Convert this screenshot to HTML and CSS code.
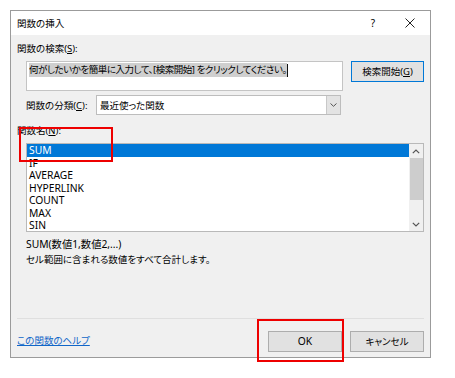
FILE: index.html
```html
<!DOCTYPE html>
<html lang="ja">
<head>
<meta charset="utf-8">
<link rel="stylesheet" href="styles.css">
</head>
<body>
<div class="dialog">
  <div class="titlebar">
    <span class="title">関数の挿入</span>
    <span class="help">?</span>
    <span class="close"><svg width="10" height="10" viewBox="0 0 10 10"><path d="M0.5 0.5 L9.5 9.5 M9.5 0.5 L0.5 9.5" stroke="#222" stroke-width="1" fill="none"/></svg></span>
  </div>
  <div class="body">
    <div class="label">関数の検索(<u>S</u>):</div>
    <div class="search-row">
      <div class="search-box"><span class="sel">何がしたいかを簡単に入力して、[検索開始] をクリックしてください。</span><span class="caret"></span></div>
      <div class="btn btn-focus">検索開始(<u>G</u>)</div>
    </div>
    <div class="cat-row">
      <div class="cat-label">関数の分類(<u>C</u>):</div>
      <div class="select">
        <span class="select-text">最近使った関数</span>
        <span class="select-btn"><svg width="7" height="4" viewBox="0 0 7 4"><path d="M0.5 0.5 L3.5 3.3 L6.5 0.5" stroke="#555" stroke-width="1" fill="none"/></svg></span>
      </div>
    </div>
    <div class="label label-fn">関数名(<u>N</u>):</div>
    <div class="listbox">
      <div class="items">
        <div class="item selected">SUM</div>
        <div class="item">IF</div>
        <div class="item">AVERAGE</div>
        <div class="item">HYPERLINK</div>
        <div class="item">COUNT</div>
        <div class="item">MAX</div>
        <div class="item">SIN</div>
      </div>
      <div class="scrollbar">
        <span class="arrow"><svg width="8" height="5" viewBox="0 0 8 5"><path d="M0.8 4.2 L4 1 L7.2 4.2" stroke="#555" stroke-width="1.2" fill="none"/></svg></span>
        <span class="thumb"></span>
        <span class="track"></span>
        <span class="arrow"><svg width="8" height="5" viewBox="0 0 8 5"><path d="M0.8 0.8 L4 4 L7.2 0.8" stroke="#555" stroke-width="1.2" fill="none"/></svg></span>
      </div>
    </div>
    <div class="desc">
      <div class="sig">SUM(数値1,数値2,...)</div>
      <div>セル範囲に含まれる数値をすべて合計します。</div>
    </div>
    <div class="separator"></div>
    <div class="bottom-row">
      <a class="link" href="#">この関数のヘルプ</a>
      <div class="buttons">
        <div class="btn btn-ok">OK</div>
        <div class="btn btn-cancel">キャンセル</div>
      </div>
    </div>
  </div>
</div>
<div class="mark mark-sum"></div>
<div class="mark mark-ok"></div>
</body>
</html>
```

FILE: styles.css
```css
html, body {
  margin: 0;
  padding: 0;
  background: #ffffff;
}
body {
  width: 455px;
  height: 378px;
  position: relative;
  overflow: hidden;
  font-family: "Noto Sans", "Noto Sans CJK JP", sans-serif;
  font-size: 9.5px;
  font-feature-settings: "palt";
  color: #000000;
}
u {
  text-decoration: underline;
  text-underline-offset: 1px;
}
.dialog {
  position: absolute;
  left: 10px;
  top: 10px;
  width: 419px;
  height: 346px;
  border: 1px solid #9b9b9b;
  background: #f0f0f0;
  display: flex;
  flex-direction: column;
}
.titlebar {
  height: 24px;
  background: #ffffff;
  display: flex;
  align-items: center;
  flex-shrink: 0;
}
.title {
  padding-left: 6px;
  flex: 1;
}
.help {
  width: 12px;
  text-align: center;
  font-size: 10px;
  margin-right: 26px;
}
.close {
  width: 10px;
  height: 10px;
  display: flex;
  margin-right: 15px;
}
.body {
  flex: 1;
  padding: 7px 6px 6px 6px;
  display: flex;
  flex-direction: column;
}
.label {
  height: 14px;
  line-height: 14px;
}
.search-row {
  margin-top: 5px;
  padding-left: 9px;
  display: flex;
  align-items: flex-start;
  gap: 8px;
}
.search-box {
  width: 311px;
  height: 26px;
  border: 1px solid #c4c4c4;
  background: #ffffff;
  padding: 1px 2px;
  display: flex;
  align-items: flex-start;
}
.sel {
  background: #cfcfcf;
  line-height: 14px;
  height: 14px;
  white-space: nowrap;
  letter-spacing: -0.45px;
}
.caret {
  width: 1px;
  height: 13px;
  background: #111;
  margin-top: 1px;
}
.btn {
  height: 19px;
  line-height: 19px;
  text-align: center;
  background: #e1e1e1;
  border: 1px solid #adadad;
}
.btn-focus {
  width: 71px;
  border-color: #0078d7;
}
.cat-row {
  margin-top: 4px;
  padding-left: 9px;
  display: flex;
  align-items: center;
  height: 20px;
}
.cat-label {
  width: 70px;
}
.select {
  width: 243px;
  height: 18px;
  border: 1px solid #bdbdbd;
  background: #ffffff;
  display: flex;
  align-items: center;
}
.select-text {
  flex: 1;
  padding-left: 3px;
}
.select-btn {
  width: 13px;
  height: 18px;
  background: #e3e3e3;
  border-left: 1px solid #c8c8c8;
  display: flex;
  align-items: center;
  justify-content: center;
}
.label-fn {
  margin-top: 9px;
}
.listbox {
  margin-top: 5px;
  margin-left: 9px;
  width: 396px;
  height: 87px;
  border: 1px solid #b9b9b9;
  background: #ffffff;
  display: flex;
}
.items {
  flex: 1;
  overflow: hidden;
}
.item {
  height: 12.5px;
  line-height: 12.5px;
  padding-left: 2px;
  font-size: 10.3px;
}
.selected {
  background: #0078d7;
  color: #ffffff;
}
.scrollbar {
  width: 14px;
  background: #f0f0f0;
  display: flex;
  flex-direction: column;
  align-items: center;
}
.arrow {
  height: 14px;
  width: 14px;
  display: flex;
  align-items: center;
  justify-content: center;
}
.thumb {
  width: 13px;
  height: 42px;
  background: #cdcdcd;
}
.track {
  flex: 1;
}
.desc {
  margin-top: 4px;
  padding-left: 9px;
  line-height: 16px;
}
.sig {
  font-size: 10.3px;
}
.separator {
  margin-top: 50px;
  height: 1px;
  background: #dfdfdf;
}
.bottom-row {
  margin-top: 12px;
  display: flex;
  align-items: center;
  justify-content: space-between;
}
.link {
  color: #1066c8;
  text-decoration: underline;
  margin-top: -4px;
}
.buttons {
  display: flex;
  gap: 8px;
}
.btn-ok, .btn-cancel {
  width: 72px;
}
.btn-ok {
  font-size: 10.3px;
}
.mark {
  position: absolute;
  border: 2px solid #ee0000;
}
.mark-sum {
  left: 19px;
  top: 127px;
  width: 90px;
  height: 31px;
}
.mark-ok {
  left: 257px;
  top: 319px;
  width: 83px;
  height: 39px;
}
```
